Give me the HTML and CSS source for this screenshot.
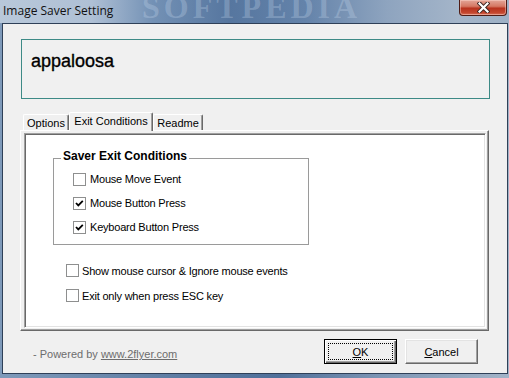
FILE: index.html
```html
<!doctype html>
<html lang="en">
<head>
  <meta charset="utf-8" />
  <title>Image Saver Setting</title>
  <link rel="stylesheet" href="styles.css">
</head>
<body>
  <div class="window">
    <div class="titlebar">
      <span class="title">Image Saver Setting</span>
      <span class="watermark">SOFTPEDIA</span>
      <button class="close" type="button" aria-label="Close">
        <svg width="13" height="11" viewBox="0 0 13 11">
          <path d="M2.5 1.5 L10.5 9.5 M10.5 1.5 L2.5 9.5" stroke="#3a2420" stroke-width="4" stroke-linecap="square" fill="none"/>
          <path d="M2.5 1.5 L10.5 9.5 M10.5 1.5 L2.5 9.5" stroke="#fff" stroke-width="2.2" stroke-linecap="square" fill="none"/>
        </svg>
      </button>
    </div>

    <div class="client">
      <div class="banner">appaloosa</div>

      <div class="tabs">
        <div class="tab tab-options">Options</div>
        <div class="tab tab-exit active">Exit Conditions</div>
        <div class="tab tab-readme">Readme</div>
      </div>

      <div class="pane">
        <div class="sheet">
          <fieldset class="group">
            <legend>Saver Exit Conditions</legend>
            <label class="check"><span class="box"></span>Mouse Move Event</label>
            <label class="check"><span class="box checked"><svg width="11" height="11" viewBox="0 0 11 11"><path d="M2 5 L4.3 7.4 L8.8 2.8" stroke="#000" stroke-width="1.8" fill="none"/></svg></span>Mouse Button Press</label>
            <label class="check"><span class="box checked"><svg width="11" height="11" viewBox="0 0 11 11"><path d="M2 5 L4.3 7.4 L8.8 2.8" stroke="#000" stroke-width="1.8" fill="none"/></svg></span>Keyboard Button Press</label>
          </fieldset>

          <div class="options">
            <label class="check row-25"><span class="box"></span>Show mouse cursor &amp; Ignore mouse events</label>
            <label class="check row-25"><span class="box"></span>Exit only when press ESC key</label>
          </div>
        </div>
      </div>

      <div class="footer">
        <span class="powered">- Powered by <a href="#">www.2flyer.com</a></span>
        <div class="btns">
          <button class="btn default" type="button"><span class="focus"><u>O</u>K</span></button>
          <button class="btn" type="button"><u>C</u>ancel</button>
        </div>
      </div>
    </div>
  </div>
</body>
</html>
```

FILE: styles.css
```css
body { margin:0; font-family:"Liberation Sans", Arial, sans-serif; font-size:11px; color:#000; }

.window { width:509px; height:378px; display:flex; flex-direction:column; box-sizing:border-box;
  background:linear-gradient(to right, #7f9aba 0%, #5d7ca3 35%, #50709a 55%, #7d96b5 75%, #a3b4c8 100%); }

/* title bar */
.titlebar { height:23px; flex:none; display:flex; align-items:flex-start; position:relative; overflow:hidden;
  background:linear-gradient(to right, #b8c8da 0%, #afc0d5 18%, #7391b5 30%, #56769f 45%, #6483aa 60%, #8ea4bf 76%, #a4b5c9 90%, #9db0c5 100%); }
.title { font-family:"Open Sans", "Liberation Sans", sans-serif; font-size:12px; line-height:21px; padding-left:3px; color:#111; position:relative; z-index:1; }
.watermark { position:absolute; left:142px; top:-9px; font-family:"Liberation Serif", serif; font-weight:700; font-size:32px; line-height:32px;
  letter-spacing:4px; color:rgba(200,218,238,.3); }
.close { margin-left:auto; margin-right:2px; width:48px; height:16px; padding:0; display:flex; align-items:center; justify-content:center;
  border:1px solid #4f1c15; border-top:0; border-radius:0 0 4px 4px;
  background:linear-gradient(#e3a698 0%, #d57863 42%, #b8331e 55%, #c4472f 85%, #d9735c 100%);
  box-shadow:inset 0 0 0 1px rgba(255,220,210,.45); position:relative; z-index:1; }

/* client area */
.client { flex:1; margin:0 1px 4px 2px; border:1px solid #2f4058; background:#f0f0f0; display:flex; flex-direction:column; min-height:0; }

.banner { margin:15px 17px 0 18px; height:60px; box-sizing:border-box; border:1px solid #3d8a86; padding:11px 0 0 9px;
  font-size:18px; line-height:21px; -webkit-text-stroke:0.35px #000; }

/* tabs */
.tabs { margin:13px 0 0 20px; height:18px; display:flex; align-items:flex-end; position:relative; z-index:1; }
.tab { height:16px; box-sizing:border-box; display:flex; align-items:center; justify-content:center; background:#f0f0f0;
  border-top:1px solid #fff; border-left:1px solid #fff; border-right:1px solid #696969; border-radius:2px 2px 0 0;
  box-shadow:inset -1px 0 #a0a0a0; padding-top:1px; }
.tab-options { width:46px; }
.tab-exit { width:84px; }
.tab-readme { width:50px; }
.tab.active { height:19px; margin-bottom:-1px; padding:0 0 3px; }

.pane { margin:0 18px 0 17px; height:201px; box-sizing:border-box; padding:2px 2px 2px 3px; display:flex;
  border-top:1px solid #fff; border-left:1px solid #fff; border-right:1px solid #696969; border-bottom:1px solid #696969;
  box-shadow:inset -1px -1px #a0a0a0; }
.sheet { flex:1; background:#fff; border-top:1px solid #a0a0a0; border-left:1px solid #a0a0a0; border-right:1px solid #fff; border-bottom:1px solid #fff;
  box-shadow:inset 1px 1px #696969, inset -1px -1px #e3e3e3; }

/* group + checkboxes */
.group { margin:15px 0 0 28px; width:256px; box-sizing:border-box; border:1px solid #9a9a9a; padding:0 0 5px 19px; min-width:0; }
.group legend { font-weight:700; font-size:12px; line-height:14px; padding:0 2px 4px; margin-left:-12px; }
.check { display:flex; align-items:center; gap:4px; height:24px; letter-spacing:-0.2px; }
.row-25 { height:25px; gap:3px; }
.box { width:13px; height:13px; box-sizing:border-box; border:1px solid #8e8f8f; background:#fff; display:flex; align-items:center; justify-content:center; flex:none; }
.options { margin:13px 0 0 41px; }

/* footer */
.footer { flex:1; display:flex; align-items:flex-start; padding:8px 29px 0 30px; }
.powered { color:#6d6d6d; margin-top:9px; }
.powered a { color:#6d6d6d; }
.btns { margin-left:auto; display:flex; gap:8px; }
.btn { width:73px; height:25px; box-sizing:border-box; padding:0; font:11px "Liberation Sans", Arial, sans-serif; color:#000; background:#f0f0f0;
  border:1px solid; border-color:#fff #696969 #696969 #fff; box-shadow:inset -1px -1px #a0a0a0, inset 1px 1px #e3e3e3;
  display:flex; align-items:center; justify-content:center; }
.btn.default { border:1px solid #000; box-shadow:inset 1px 1px #fff, inset -1px -1px #696969, inset -2px -2px #a0a0a0; padding:3px; }
.focus { flex:1; align-self:stretch; display:flex; align-items:center; justify-content:center; border:1px dotted #000; }
```
